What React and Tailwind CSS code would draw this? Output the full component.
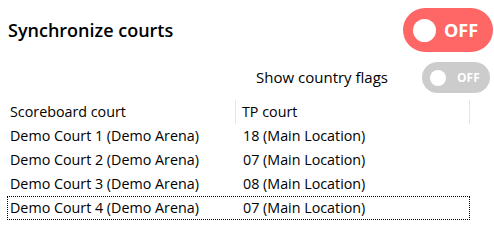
import { useState } from "react"

const rows = [
    ["Demo Court 1 (Demo Arena)", "18 (Main Location)"],
    ["Demo Court 2 (Demo Arena)", "07 (Main Location)"],
    ["Demo Court 3 (Demo Arena)", "08 (Main Location)"],
    ["Demo Court 4 (Demo Arena)", "07 (Main Location)"],
]

export default function App() {
    const [selected] = useState(3)

    return (
        <div className="w-[494px] h-[229px] bg-white text-black font-['Open_Sans','Noto_Sans',sans-serif] overflow-hidden">
            <div className="flex items-center justify-between pt-2 pl-2 pr-px">
                <h1 className="text-[18px] font-semibold leading-none">Synchronize courts</h1>
                <div className="w-[90px] h-[44px] rounded-full bg-[#ff6666] flex items-center pl-[10px] gap-[8px]">
                    <span className="w-[23px] h-[23px] rounded-full bg-white" />
                    <span className="text-white text-[18px] font-bold leading-none">OFF</span>
                </div>
            </div>

            <div className="flex items-center justify-end gap-[34px] mt-[10px] pr-1">
                <span className="text-[15px] leading-none">Show country flags</span>
                <div className="w-[68px] h-[31px] rounded-full bg-[#cccccc] flex items-center pl-[8px] gap-[11px]">
                    <span className="w-[16px] h-[16px] rounded-full bg-white" />
                    <span className="text-white text-[12px] font-bold leading-none">OFF</span>
                </div>
            </div>

            <div className="ml-[7px] mt-[7px] w-[463px] text-[14.3px]">
                <div className="flex h-[24px] items-center">
                    <div className="w-[229px] pl-[3px] h-full flex items-center border-r border-[#e5e5e5]">Scoreboard court</div>
                    <div className="flex-1 pl-[6px] h-full flex items-center border-r border-[#e5e5e5]">TP court</div>
                </div>
                {rows.map(([a, b], i) => (
                    <div
                        key={i}
                        className={`flex h-[24px] items-center ${i === selected ? "border border-dotted border-black" : "border border-transparent"}`}
                    >
                        <div className="w-[229px] pl-[2px]">{a}</div>
                        <div className="flex-1 pl-[6px]">{b}</div>
                    </div>
                ))}
            </div>
        </div>
    )
}
